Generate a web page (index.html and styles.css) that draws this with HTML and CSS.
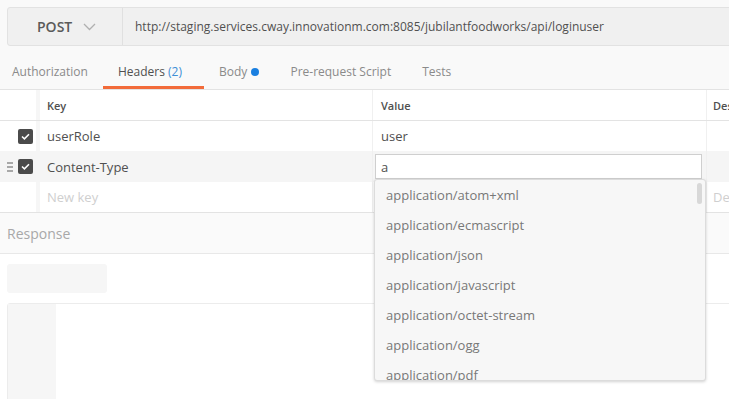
FILE: index.html
```html
<!DOCTYPE html>
<html>
<head>
<meta charset="utf-8">
<link rel="stylesheet" href="styles.css">
</head>
<body>
<div class="top">
  <div class="urlbar">
    <div class="method">
      <span class="method-name">POST</span>
      <svg class="chev" width="13" height="8" viewBox="0 0 13 8"><path d="M1 1 L6.5 6.5 L12 1" fill="none" stroke="#b0b0b0" stroke-width="1.3"/></svg>
    </div>
    <div class="url">http://staging.services.cway.innovationm.com:8085/jubilantfoodworks/api/loginuser</div>
  </div>
  <div class="tabs">
    <div class="tab">Authorization</div>
    <div class="tab active">Headers <span class="count">(2)</span></div>
    <div class="tab">Body <span class="dot"></span></div>
    <div class="tab">Pre-request Script</div>
    <div class="tab">Tests</div>
  </div>
</div>

<div class="table">
  <div class="row head">
    <div class="c1"></div>
    <div class="c2">Key</div>
    <div class="c3">Value</div>
    <div class="c4">Des</div>
  </div>
  <div class="row">
    <div class="c1"><span class="cb"><svg width="9" height="7" viewBox="0 0 9 7"><path d="M1 3.5 L3.4 5.8 L8 1.2" fill="none" stroke="#fff" stroke-width="1.6"/></svg></span></div>
    <div class="c2">userRole</div>
    <div class="c3">user</div>
    <div class="c4"></div>
  </div>
  <div class="row hover">
    <div class="c1"><span class="drag"><i></i><i></i><i></i></span><span class="cb"><svg width="9" height="7" viewBox="0 0 9 7"><path d="M1 3.5 L3.4 5.8 L8 1.2" fill="none" stroke="#fff" stroke-width="1.6"/></svg></span></div>
    <div class="c2">Content-Type</div>
    <div class="c3 editing">
      <div class="input">a</div>
      <div class="dropdown">
        <div class="item">application/atom+xml</div>
        <div class="item">application/ecmascript</div>
        <div class="item">application/json</div>
        <div class="item">application/javascript</div>
        <div class="item">application/octet-stream</div>
        <div class="item">application/ogg</div>
        <div class="item">application/pdf</div>
        <span class="thumb"></span>
      </div>
    </div>
    <div class="c4"></div>
  </div>
  <div class="row">
    <div class="c1"></div>
    <div class="c2 ph">New key</div>
    <div class="c3"></div>
    <div class="c4 ph">De</div>
  </div>
</div>

<div class="response">Response</div>
<div class="resp-body">
  <div class="pill"></div>
  <div class="editor"><div class="gutter"></div></div>
</div>
</body>
</html>
```

FILE: styles.css
```css
html, body {
  margin: 0;
  padding: 0;
  background: #fff;
  overflow: hidden;
  width: 729px;
  height: 399px;
}
body {
  font-family: "Open Sans", "Liberation Sans", sans-serif;
  color: #505050;
}
.top {
  background: #f9f9f9;
  padding: 7px 0 0 7px;
  border-bottom: 1px solid #e3e3e3;
}
.urlbar {
  display: flex;
  height: 37px;
  width: 760px;
  background: #f0f0f0;
  border: 1px solid #e2e2e2;
  border-radius: 3px;
}
.method {
  width: 115px;
  border-right: 1px solid #e0e0e0;
  display: flex;
  align-items: center;
  padding-left: 29px;
  box-sizing: border-box;
  gap: 11px;
}
.method-name {
  font-size: 14px;
  font-weight: 600;
  color: #5a5a5a;
}
.url {
  display: flex;
  align-items: center;
  padding-left: 12px;
  font-size: 12px;
  color: #505050;
}
.tabs {
  display: flex;
  height: 42px;
  margin-left: -7px;
  margin-top: 1px;
  align-items: flex-end;
}
.tab {
  font-size: 12px;
  color: #8a8a8a;
  height: 32px;
  box-sizing: border-box;
  padding: 6px 0 0;
  margin-right: 31px;
  white-space: nowrap;
}
.tab:first-child { margin-left: 12px; margin-right: 30px; }
.tab.active {
  color: #505050;
  border-bottom: 3px solid #f26b3a;
  padding-left: 15px;
  padding-right: 22px;
  margin-left: -15px;
  margin-right: 15px;
}
.count { color: #3f8fd6; }
.dot {
  display: inline-block;
  width: 8px;
  height: 8px;
  border-radius: 50%;
  background: #1a7fe0;
  margin-left: 1px;
  vertical-align: 0;
}
.table { position: relative; }
.row {
  display: grid;
  grid-template-columns: 36px 336px 334px 60px;
  height: 30px;
  font-size: 13px;
}
.row.head {
  font-size: 11px;
  font-weight: 600;
  border-bottom: 1px solid #e3e3e3;
}
.row.hover { background: #f5f5f5; height: 31px; }
.row:last-child { border-bottom: 1px solid #e3e3e3; }
.row > div {
  display: flex;
  align-items: center;
  box-sizing: border-box;
}
.c1 { justify-content: flex-end; padding-right: 3px; gap: 6px; }
.c2 { border-left: 4px solid #f6f6f6; padding-left: 7px; }
.row.hover .c2 { border-left-color: #f5f5f5; }
.c3 { border-left: 1px solid #f0f0f0; padding-left: 8px; }
.c4 { border-left: 1px solid #f0f0f0; padding-left: 6px; }
.ph { color: #cfcfcf; }
.cb {
  width: 15px;
  height: 15px;
  border-radius: 2px;
  background: #4b4b4b;
  display: flex;
  align-items: center;
  justify-content: center;
}
.drag {
  display: flex;
  flex-direction: column;
  gap: 2px;
  margin-right: -1px;
}
.drag i {
  display: block;
  width: 6px;
  height: 2px;
  background: #a8a8a8;
}
.editing { position: relative; padding-left: 2px !important; }
.input {
  width: 327px;
  height: 25px;
  box-sizing: border-box;
  border: 1px solid #cfcfcf;
  background: #fff;
  padding-left: 5px;
  display: flex;
  align-items: center;
  font-size: 13px;
  color: #505050;
}
.dropdown {
  position: absolute;
  left: 1px;
  top: 28px;
  width: 332px;
  height: 202px;
  box-sizing: border-box;
  background: #f7f7f7;
  border: 1px solid #dcdcdc;
  border-radius: 3px;
  box-shadow: 0 1px 3px rgba(0,0,0,0.18);
  overflow: hidden;
  z-index: 5;
}
.item {
  height: 30px;
  line-height: 30px;
  padding-left: 11px;
  font-size: 13px;
  color: #787878;
}
.thumb {
  position: absolute;
  right: 3px;
  top: 3px;
  width: 5px;
  height: 21px;
  border-radius: 3px;
  background: #d8d8d8;
}
.response {
  height: 40px;
  background: #fafafa;
  border-bottom: 1px solid #e8e8e8;
  display: flex;
  align-items: center;
  padding-left: 7px;
  font-size: 14px;
  color: #a8a8a8;
}
.resp-body { padding: 10px 0 0 7px; }
.pill {
  width: 100px;
  height: 29px;
  border-radius: 3px;
  background: #f6f6f6;
}
.editor {
  margin-top: 10px;
  width: 760px;
  height: 120px;
  border: 1px solid #ececec;
  border-radius: 3px;
  display: flex;
}
.gutter {
  width: 48px;
  background: #f6f6f6;
}
```
